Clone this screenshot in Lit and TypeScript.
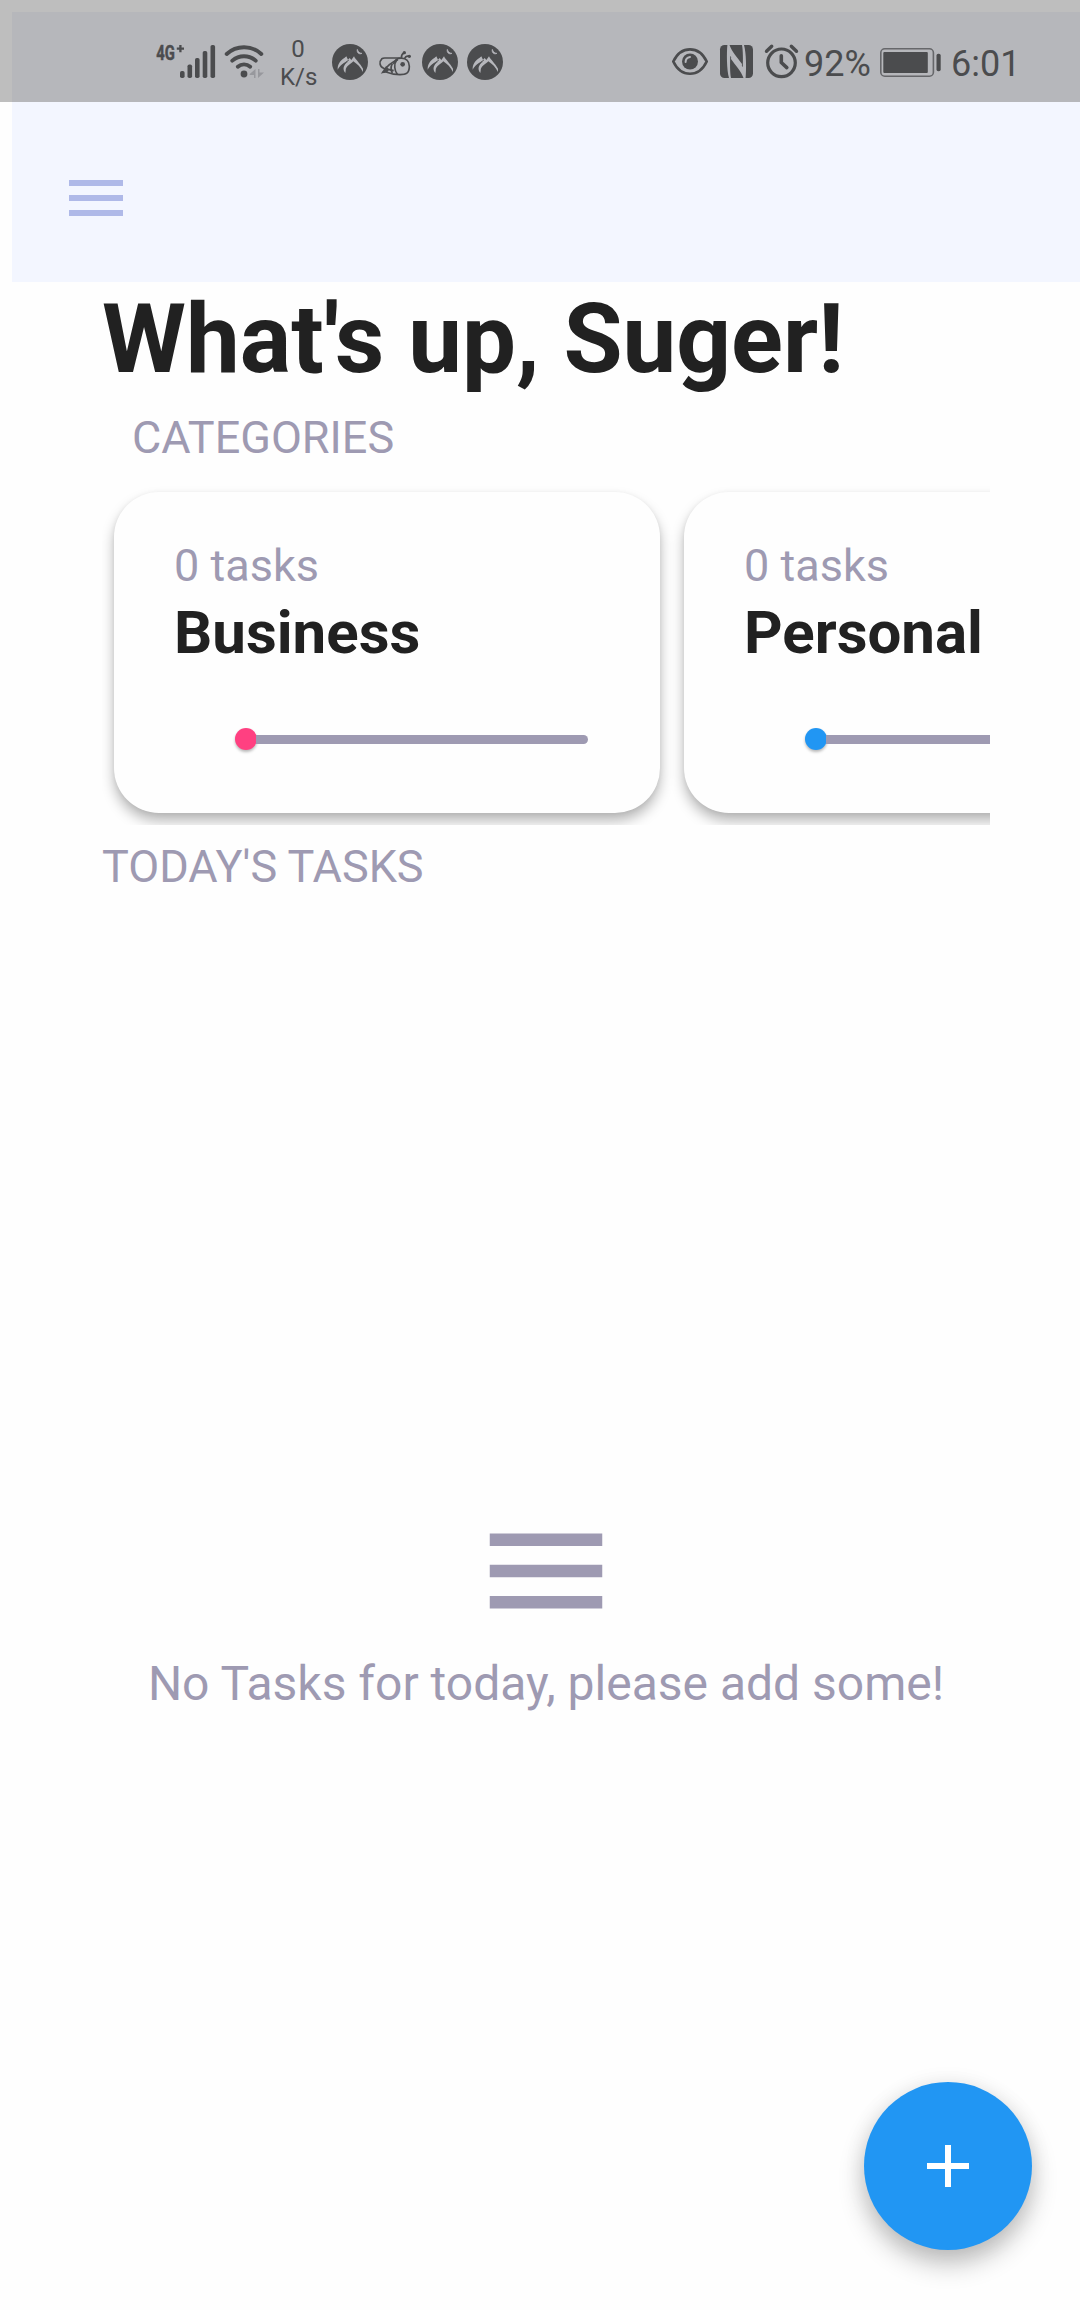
import { LitElement, html, css, svg } from "lit";
import { customElement, property } from "lit/decorators.js";
import { classMap } from "lit/directives/class-map.js";

const peak = html`
  <svg class="icon peak" width="36" height="36" viewBox="0 0 108 108">
    <circle cx="54" cy="54" r="54" fill="#4b4c4e" />
    <path
      d="M17 77 C16 62 24 50 37 42 C40 40 41 39 43 37 L48 47 L53 42 L58 48 L66 37 C70 46 84 58 93 74 L93 84 C86 70 76 60 64 52 C54 63 41 66 41 80 L40 87 C30 76 35 62 47 54 C33 56 25 64 17 77 Z"
      fill="#b6b7bc"
    />
    <path d="M26 74 C29 64 38 56 50 49" fill="none" stroke="#4b4c4e" stroke-width="3" />
    <path d="M76 16 C73 25 81 33 90 28 C84 28 78 24 76 16 Z" fill="#b6b7bc" stroke="#b6b7bc" stroke-width="2" />
  </svg>
`;

@customElement("status-bar")
class StatusBar extends LitElement {
  static styles = css`
    :host {
      display: flex;
      box-sizing: border-box;
      height: 102px;
      padding: 22px 66px 0 156px;
      align-items: center;
      background: rgba(0, 0, 0, 0.25);
      color: #4b4c4e;
      font-family: Roboto, sans-serif;
      overflow: hidden;
    }
    .icon {
      display: block;
      flex: none;
      overflow: visible;
    }
    .wifi { margin-left: 8px; }
    .speed {
      margin-left: 14px;
      width: 36px;
      padding-top: 2px;
      font-size: 24px;
      line-height: 28px;
      text-align: center;
      white-space: nowrap;
    }
    .peak { margin-left: 9px; }
    .speed + .peak { margin-left: 16px; }
    .bee { margin-left: 10px; }
    .eye { margin-left: auto; }
    .nfc { margin-left: 12px; }
    .alarm { margin-left: 12px; }
    .value {
      padding-top: 3px;
      font-size: 36px;
      line-height: 42px;
      white-space: nowrap;
    }
    .percent { margin-left: 6px; width: 66px; }
    .battery { margin-left: 10px; }
    .clock { margin-left: 9px; width: 63px; }
  `;

  render() {
    const bars = [
      [24, 27], [31.5, 20.5], [39, 14], [46.7, 7], [54.5, 1],
    ];
    return html`
      <svg class="icon" width="60" height="36" viewBox="0 0 60 36">
        <text x="0.3" y="15.8" font-size="21" font-weight="700" textLength="18.6" lengthAdjust="spacingAndGlyphs" fill="currentColor" stroke="currentColor" stroke-width="0.5">4G</text>
        <path d="M20.8 4.6 H28 M24.4 1 V8.2" stroke="currentColor" stroke-width="2.3" />
        ${bars.map(([x, y]) => svg`<rect x=${x} y=${y} width="4.6" height=${34 - y} rx="1.8" fill="currentColor" />`)}
      </svg>
      <svg class="icon wifi" width="42" height="36" viewBox="0 0 42 36">
        <g fill="none" stroke="currentColor" stroke-width="3.9" stroke-linecap="round">
          <path d="M2.7 10 C12.5 1 27.5 1 37.3 10" />
          <path d="M8.3 16.6 C15 10.8 25 10.8 31.7 16.6" />
          <path d="M13.8 22.8 C17.4 19.6 22.6 19.6 26.2 22.8" />
        </g>
        <circle cx="20" cy="30" r="3.4" fill="currentColor" />
        <path d="M25.7 30 L31.5 25 V34 H30 V31 H25.7 Z M34 25 H35.5 V28.5 H40 L34 34 Z" fill="#97989d" />
      </svg>
      <div class="speed"><div>0</div><div>K/s</div></div>
      ${peak}
      <svg class="icon bee" width="35" height="36" viewBox="0 0 105 108">
        <g fill="none" stroke="currentColor" stroke-width="5">
          <path d="M47 80 L17 73 C5 68 2 54 12 44 C15 41 20 42 25 42 H67" />
          <path d="M47 61 C47 36 94 34 94 67 C94 88 84 92 66 92 C50 92 34 88 24 84 H14" />
          <path d="M60 47 C40 54 26 66 14 85 L30 80" />
          <path d="M56 48 C47 60 49 80 58 91 M43 59 C38 68 38 78 43 87" />
          <path d="M70 42 C70 34 73 29 78 27 M79 45 C82 38 88 35 94 37" />
        </g>
        <path d="M24 65 L34 78 L16 88 Z" fill="currentColor" />
        <circle cx="74" cy="61" r="7" fill="currentColor" />
        <circle cx="79" cy="26" r="5" fill="currentColor" />
        <circle cx="94" cy="37" r="5" fill="currentColor" />
      </svg>
      ${peak}${peak}
      <svg class="icon eye" width="36" height="36" viewBox="0 0 36 36">
        <path d="M1.3 17.5 C9 1.2 27 1.2 34.7 17.5 C27 33.8 9 33.8 1.3 17.5 Z" fill="none" stroke="currentColor" stroke-width="2.7" stroke-linejoin="round" />
        <circle cx="18" cy="17.5" r="8" fill="currentColor" />
        <path d="M13.6 18 C13.6 15.3 15.4 13.4 18 13" fill="none" stroke="#b6b7bc" stroke-width="2" stroke-linecap="round" />
      </svg>
      <svg class="icon nfc" width="33" height="36" viewBox="0 0 33 36">
        <rect x="0" y="1" width="33" height="33" rx="4.5" fill="currentColor" />
        <path d="M7.4 1 C6.6 8 6.6 26 9 34 L11 34 C10 29 9.9 19 10.3 12 C14 16 18.5 20 21.5 25 L22 20 C17 13 12 8 9.5 1 Z" fill="#b6b7bc" />
        <path d="M25.6 34 C26.4 26 26.4 9 24 1 L22 1 C23 6 23.1 16 22.8 23 C19 19 14.5 15 11.5 10 L11 15 C16 22 21 27 23.5 34 Z" fill="#b6b7bc" />
      </svg>
      <svg class="icon alarm" width="33" height="36" viewBox="0 0 33 36">
        <g fill="none" stroke="currentColor">
          <circle cx="16.5" cy="18.8" r="13.8" stroke-width="3.2" />
          <path d="M16.3 11.8 V18.5 L21.8 23.6" stroke-width="3.6" stroke-linecap="round" stroke-linejoin="round" />
          <path d="M1.5 7.2 L6.7 2.2 M31.5 7.2 L26.3 2.2" stroke-width="3.4" stroke-linecap="round" />
        </g>
      </svg>
      <span class="value percent">92%</span>
      <svg class="icon battery" width="62" height="36" viewBox="0 0 62 36">
        <rect x="0.8" y="4.8" width="52.6" height="27.4" rx="4" fill="none" stroke="#66676a" stroke-width="1.6" />
        <rect x="3.3" y="8" width="44.5" height="21" rx="1" fill="currentColor" />
        <rect x="56.5" y="9.7" width="4.2" height="17.5" rx="1.8" fill="currentColor" />
      </svg>
      <span class="value clock">6:01</span>
    `;
  }
}

@customElement("category-card")
class CategoryCard extends LitElement {
  @property() label = "";
  @property() accent = "pink";
  @property({ type: Number }) count = 0;

  static styles = css`
    :host {
      display: block;
      flex: none;
      box-sizing: border-box;
      width: 546px;
      height: 321px;
      padding: 47px 60px 0;
      border-radius: 45px;
      background: #fefefe;
      box-shadow: 0 8px 13px rgba(0, 0, 0, 0.28), 0 1px 5px rgba(0, 0, 0, 0.06);
    }
    .count {
      font-size: 45px;
      line-height: 53px;
      color: #9e9ab2;
    }
    .label {
      margin-top: 6px;
      font-size: 60px;
      line-height: 70px;
      font-weight: 700;
      color: #212121;
    }
    .slider {
      display: flex;
      align-items: center;
      height: 22px;
      margin: 60px 12px 0 61px;
    }
    .thumb {
      flex: none;
      width: 22px;
      height: 22px;
      border-radius: 50%;
      box-shadow: 0 2px 3px rgba(0, 0, 0, 0.28);
    }
    .pink { background: #ff4081; }
    .blue { background: #2196f3; }
    .track {
      flex: 1;
      height: 9px;
      margin-left: -1px;
      border-radius: 0 4.5px 4.5px 0;
      background: #9e9ab2;
    }
  `;

  render() {
    return html`
      <div class="count">${this.count} tasks</div>
      <div class="label">${this.label}</div>
      <div class="slider">
        <div class=${classMap({ thumb: true, [this.accent]: true })}></div>
        <div class="track"></div>
      </div>
    `;
  }
}

@customElement("app-root")
class AppRoot extends LitElement {
  static styles = css`
    :host {
      display: block;
      position: relative;
      box-sizing: border-box;
      width: 1080px;
      height: 2310px;
      padding: 12px 0 0 12px;
      overflow: hidden;
      background: #fefefe;
      font-family: Roboto, sans-serif;
      color: #9e9ab2;
    }
    .status {
      position: absolute;
      top: 0;
      left: 0;
      right: 0;
    }
    .page {
      display: flex;
      flex-direction: column;
      height: 100%;
    }
    .bar {
      box-sizing: border-box;
      height: 270px;
      padding: 168px 0 0 57px;
      background: linear-gradient(#f3f4fa 90px, #f3f6ff 90px);
    }
    .icon { display: block; }
    .content {
      flex: 1;
      display: flex;
      flex-direction: column;
      padding: 0 90px;
    }
    .title {
      margin: 1px 0 0;
      font-size: 96px;
      line-height: 112px;
      font-weight: 700;
      color: #212121;
      white-space: nowrap;
    }
    .caption {
      font-size: 45px;
      line-height: 53px;
    }
    .categories { margin: 16px 0 0 30px; }
    .list {
      display: flex;
      gap: 24px;
      box-sizing: border-box;
      height: 345px;
      margin-top: 16px;
      padding: 12px;
      overflow: hidden;
    }
    .today { margin-top: 15px; }
    .empty {
      display: flex;
      flex-direction: column;
      align-items: center;
      gap: 10px;
      margin-top: 603px;
      font-size: 48px;
      line-height: 56px;
      white-space: nowrap;
    }
    .fab {
      position: absolute;
      right: 48px;
      bottom: 60px;
      display: flex;
      align-items: center;
      justify-content: center;
      width: 168px;
      height: 168px;
      padding: 0;
      border: 0;
      border-radius: 50%;
      background: #2196f3;
      box-shadow: 0 14px 26px rgba(0, 0, 0, 0.24), 0 2px 22px rgba(0, 0, 0, 0.08);
    }
  `;

  render() {
    return html`
      <div class="page">
        <header class="bar">
          <svg class="icon" width="54" height="36" viewBox="3 6 18 12">
            <path d="M3 6h18v2H3zM3 11h18v2H3zM3 16h18v2H3z" fill="#afb9e8" />
          </svg>
        </header>
        <main class="content">
          <h1 class="title">What's up, Suger!</h1>
          <div class="caption categories">CATEGORIES</div>
          <div class="list">
            <category-card label="Business" accent="pink"></category-card>
            <category-card label="Personal" accent="blue"></category-card>
          </div>
          <div class="caption today">TODAY'S TASKS</div>
          <div class="empty">
            <svg class="icon" width="150" height="150" viewBox="0 0 24 24">
              <path d="M3 18h18v-2H3v2zm0-5h18v-2H3v2zm0-7v2h18V6H3z" fill="#9e9ab2" />
            </svg>
            <div>No Tasks for today, please add some!</div>
          </div>
        </main>
      </div>
      <status-bar class="status"></status-bar>
      <button class="fab" aria-label="Add task">
        <svg class="icon" width="72" height="72" viewBox="0 0 24 24">
          <path d="M19 13h-6v6h-2v-6H5v-2h6V5h2v6h6v2z" fill="#fff" />
        </svg>
      </button>
    `;
  }
}
